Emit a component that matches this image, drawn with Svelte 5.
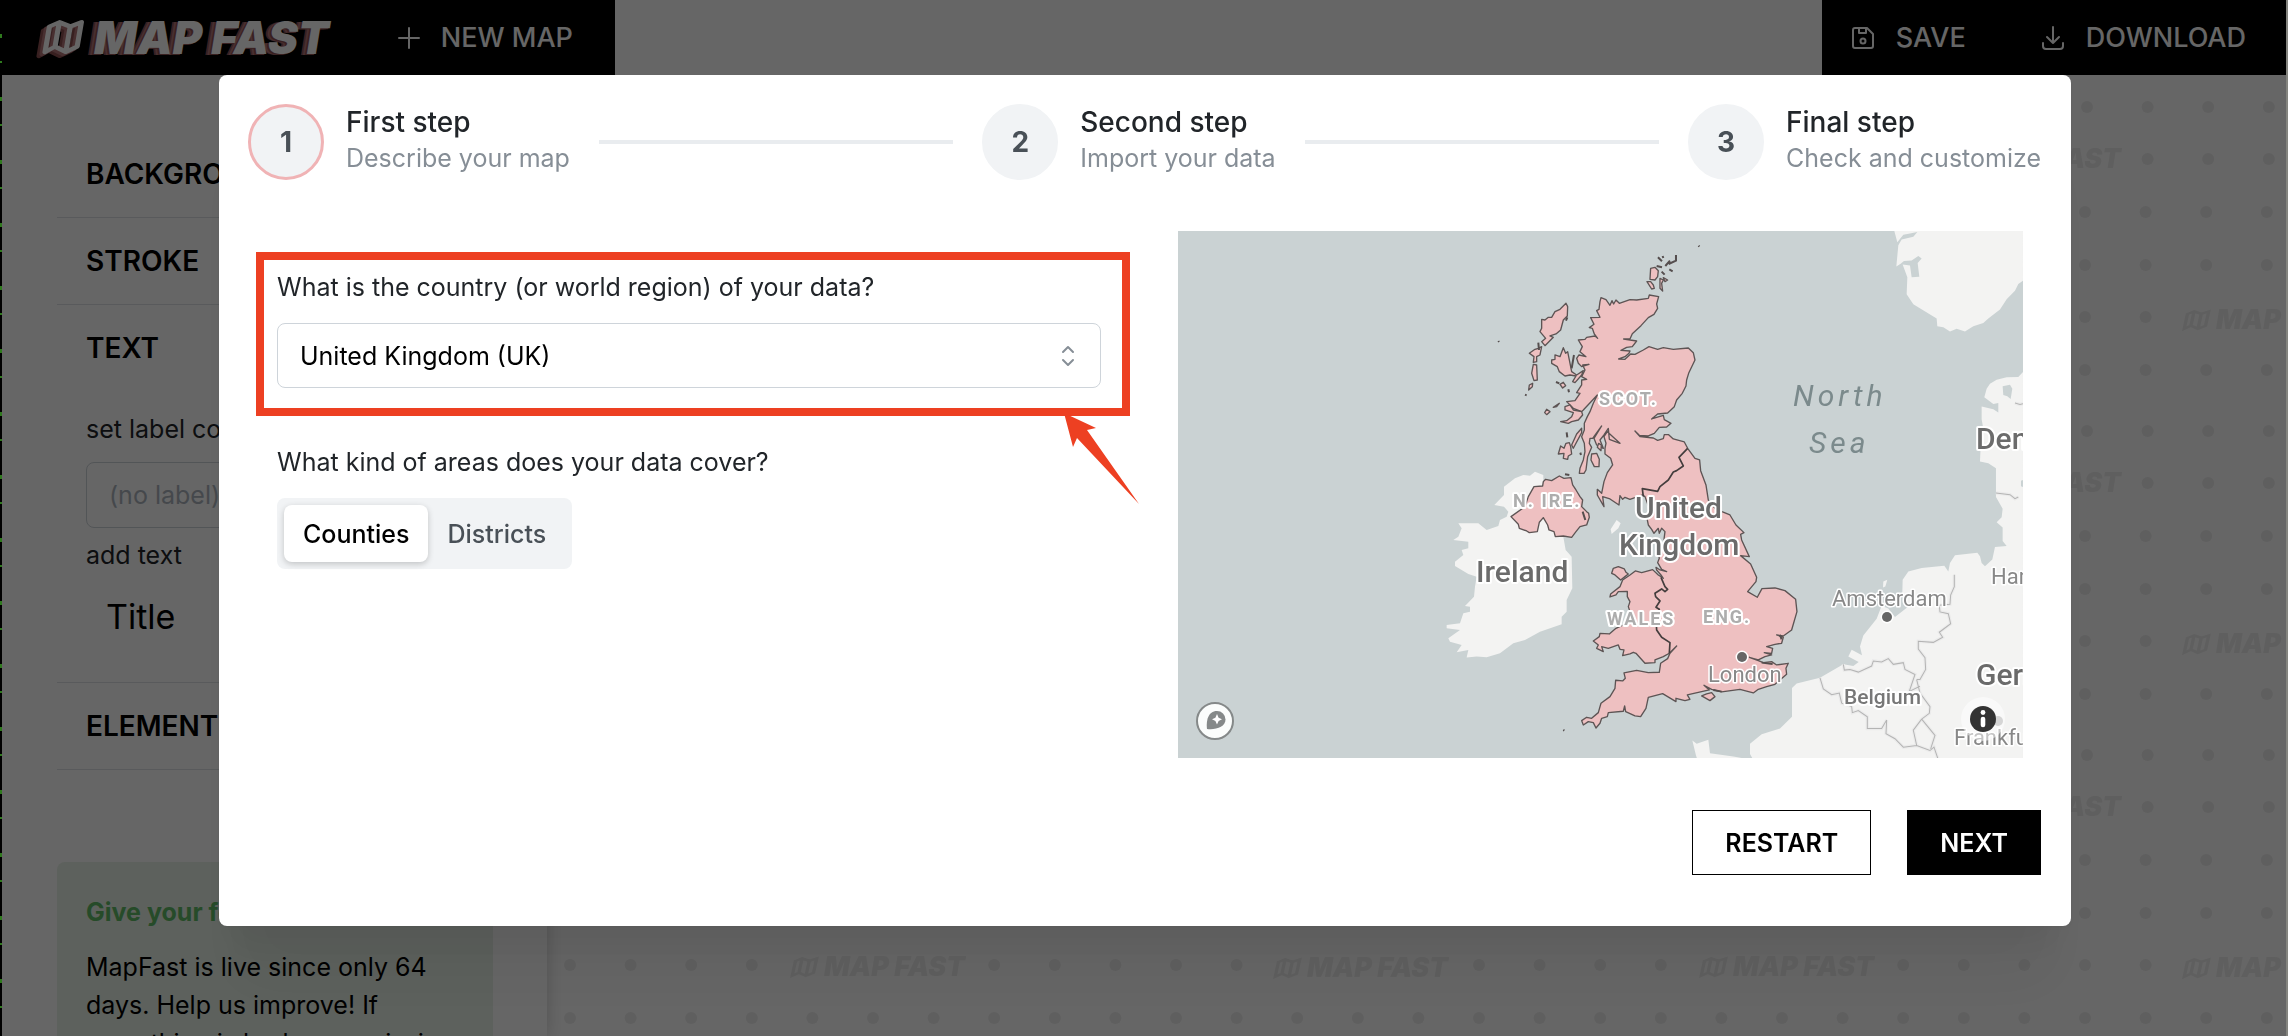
<script>
  let country = $state('United Kingdom (UK)');
  let area = $state('Counties');
  let label = $state('');

  const steps = [
    { n: 1, title: 'First step', text: 'Describe your map' },
    { n: 2, title: 'Second step', text: 'Import your data' },
    { n: 3, title: 'Final step', text: 'Check and customize' }
  ];
  const areas = ['Counties', 'Districts'];

  // Dot grid of the canvas wallpaper; some cells give way to a logo.
  const rows = [
    { y: 32, x: 32, skip: [] },
    { y: 84, x: 32, skip: [8, 9, 10] },
    { y: 137, x: 30, skip: [] },
    { y: 190, x: 30, skip: [] },
    { y: 242, x: 30, skip: [4, 5, 6, 12, 13, 14] },
    { y: 295, x: 30, skip: [] }
  ];
  const dots = rows.flatMap((r) =>
    Array.from({ length: 15 }, (_, i) => i)
      .filter((i) => !r.skip.includes(i))
      .map((i) => ({ x: r.x + (i * 909) / 15, y: r.y }))
  );
  const marks = [
    { x: 498, y: 84 },
    { x: 251, y: 244 },
    { x: 734, y: 245 }
  ];

  const britain =
    'M603 203L618 209 630 226 636 212 641 222 648 210 658 220 690 209 710 210 745 205 748 195 776 200 770 222 773 235 762 253 745 263 723 287 697 311 690 327 671 327 710 333 697 350 680 352 663 361 690 363 687 370 675 380 656 387 675 388 692 372 705 373 730 360 747 350 773 358 790 353 820 358 865 354 880 368 885 390 866 430 860 450 858 468 847 490 830 510 823 530 803 549 773 552 755 567 790 556 793 569 813 580 800 591 778 592 763 610 745 618 718 616 705 603 720 620 760 624 773 631 790 626 793 614 806 614 820 627 853 636 863 655 885 685 899 690 902 722 918 765 925 810 945 835 966 845 990 855 1008 885 1032 908 1022 913 1025 930 1048 980 1022 977 1052 1002 1070 1042 1068 1055 1043 1085 1072 1102 1086 1076 1125 1074 1155 1082 1187 1108 1191 1145 1175 1200 1150 1218 1130 1215 1150 1222 1145 1240 1125 1243 1100 1250 1118 1255 1115 1270 1093 1268 1115 1275 1095 1280 1075 1290 1048 1282 1075 1292 1090 1298 1115 1295 1130 1305 1165 1300 1158 1315 1160 1333 1125 1363 1100 1370 1075 1378 1060 1389 1020 1378 965 1386 935 1378 912 1366 928 1380 895 1387 862 1395 870 1408 855 1412 828 1405 828 1415 788 1391 745 1402 738 1435 722 1460 705 1458 677 1445 674 1428 670 1444 625 1448 622 1460 605 1465 600 1480 588 1494 580 1478 565 1475 550 1485 545 1472 560 1462 575 1465 595 1448 603 1420 630 1400 645 1375 647 1351 668 1353 676 1345 672 1329 710 1321 745 1328 778 1327 782 1300 803 1286 810 1270 830 1248 808 1270 790 1280 765 1290 765 1298 735 1300 708 1270 700 1267 690 1272 668 1277 672 1260 660 1258 655 1245 625 1255 605 1250 610 1265 590 1255 595 1245 580 1233 598 1220 600 1210 628 1212 648 1195 670 1185 690 1145 685 1130 690 1115 682 1100 682 1084 655 1085 648 1095 630 1101 632 1092 660 1070 668 1050 690 1035 706 1023 725 1028 758 1019 775 1035 790 1045 783 1035 770 1020 768 1012 780 1020 800 1025 785 1018 773 998 778 985 775 970 790 945 795 905 785 895 778 910 775 895 762 910 755 898 745 885 742 870 746 830 735 800 728 795 690 808 675 802 668 808 660 797 657 825 630 807 608 800 612 830 592 795 592 778 605 790 612 755 622 728 638 705 632 685 615 672 615 655 618 640 612 620 622 605 660 640 628 628 625 595 612 615 600 630 610 655 590 645 582 625 605 588 578 625 570 625 568 640 575 652 563 680 558 720 552 730 538 730 540 715 550 690 555 665 553 640 545 620 553 600 553 580 562 560 570 545 580 520 592 495 550 540 545 545 520 535 500 515 525 512 540 490 530 488 545 465 545 450 560 448 545 440 555 420 548 405 567 403 545 410 535 400 530 385 537 375 558 380 540 365 547 350 535 330 555 328 560 322 585 318 593 325 583 312 577 295 568 293 582 283 572 263 600 262 590 242 597 238 600 215Z';
  const ulster =
    'M437 748L455 752 478 738 492 745 513 743 518 765 528 780 540 800 548 810 545 830 560 845 566 850 568 862 560 885 540 890 528 905 515 922 490 918 466 920 462 905 447 900 443 885 430 863 418 877 412 905 388 908 380 903 358 895 355 883 333 860 375 830 385 800 402 770 428 768 430 755Z';
  const islands = [
    'M498 220L503 230 502 258 490 270 482 300 468 312 450 318 460 322 435 347 425 335 437 325 420 305 425 295 425 268 435 270 445 262 455 262 465 245 480 238Z',
    'M388 370L405 358 415 355 425 350 420 375 410 380 410 395 400 397 402 380Z',
    'M400 403L410 405 412 450 402 452 395 430Z',
    'M388 465L398 460 397 470 386 480Z',
    'M490 353L497 370 503 365 508 390 515 425 530 435 550 422 545 435 525 458 518 455 528 438 510 435 495 438 478 425 472 410 455 400 455 390 465 388 465 375 480 380Z',
    'M480 463L490 457 497 467 488 474Z',
    'M434 548L440 538 450 545 440 554Z M460 532L478 520 470 530Z',
    'M495 530L510 525 520 540 545 545 548 555 535 570 515 575 505 580 482 575 500 572 515 560 520 548 495 540Z',
    'M545 595L545 608 520 655 515 645 530 612Z',
    'M475 672L482 648 492 655 498 640 508 638 512 650 515 672 505 678 503 688 490 685 492 670Z',
    'M575 672L590 670 598 688 597 710 583 710 573 690Z',
    'M596 640L604 645 603 662 592 652Z',
    'M752 115L765 112 775 122 773 140 765 150 750 148Z M741 155L752 155 760 165 763 175 755 177Z M780 145L790 150 785 160 788 183 780 175Z M790 143L803 150 795 155Z',
    'M640 1015L655 1010 673 1017 678 1027 685 1032 675 1040 662 1050 645 1035 635 1030Z',
    'M905 1398L920 1392 935 1388 945 1400 930 1412Z'
  ];
  const specks =
    'M774 82L786 94 M788 78L790 84 M828 75L828 92 806 102 M810 92L796 108 M770 108L786 112 M785 125L794 134 M808 118L818 124 M896 47L898 50 M295 333L297 336 M502 262L498 272 M415 338L417 360 M522 375L515 415 M468 456L478 460 M505 478L507 487 M375 494L380 496 M500 607L502 622 M495 733L508 735 M541 668L543 675 M490 1500L493 1502 M940 1380L965 1385 M1085 1298L1118 1302 M1140 1215L1145 1228 M548 845L556 870';
  const ireland =
    'M430 735L405 725 390 737 370 735 345 745 312 770 312 795 283 825 312 830 325 845 320 860 300 870 295 888 260 900 235 880 175 880 185 895 175 920 160 930 205 935 205 955 185 960 190 975 165 995 165 1008 205 1032 230 1040 225 1070 222 1100 195 1128 210 1130 210 1145 190 1150 180 1180 140 1185 140 1195 180 1200 145 1225 150 1235 185 1245 170 1267 205 1260 200 1283 230 1280 260 1282 300 1270 340 1240 375 1230 420 1205 485 1183 485 1160 500 1145 500 1110 517 1075 515 980 497 960 490 920 430 850Z M632 898L650 870 662 880 655 895 635 912Z';
  const norway =
    'M343 3L352 36 370 14 390 10 412 6 400 20 365 28 355 45 349 108 362 100 372 92 395 90 415 77 425 84 413 98 418 138 395 140 390 105 368 102 382 140 380 190 400 220 470 262 472 285 490 288 510 300 530 292 555 300 580 285 610 275 625 262 660 235 680 205 705 180 715 160 729 150 729 3Z';
  const continent =
    'M729 420L715 435 680 436 650 443 630 455 620 470 613 495 640 515 655 512 655 540 640 530 605 522 605 560 612 600 602 640 600 685 625 690 648 705 648 790 668 825 665 850 650 865 668 880 668 920 680 935 645 938 637 975 615 995 605 985 600 965 592 955 525 962 510 985 505 1010 493 993 425 1000 385 1010 368 1035 367 1075 388 1112 345 1145 325 1120 305 1112 290 1150 250 1200 240 1232 246 1258 215 1242 205 1262 236 1278 220 1290 190 1285 120 1325 50 1342 36 1355 36 1440 0 1475 -55 1492 -90 1520 -90 1550 -80 1568 -140 1558 -210 1548 -215 1508 -250 1520 -263 1510 -252 1555 -245 1575 729 1575Z M310 1040L322 1035 316 1055 309 1058Z';
  const lakes = 'M668 462L690 458 697 470 692 500 682 492 670 488Z M723 742L729 740 729 760 723 758Z';
  const borders =
    'M523 1020L523 1055 512 1080 510 1107 478 1110 480 1130 505 1135 512 1165 478 1190 488 1205 460 1220 415 1217 415 1240 435 1265 437 1300 420 1330 410 1330 M648 778L690 783 705 795 715 790 M705 512L720 516 729 514 M190 1285L193 1302 210 1300 235 1308 275 1290 280 1275 305 1278 325 1268 340 1285 370 1280 375 1300 405 1315 388 1365 420 1350 M120 1325L130 1358 155 1375 178 1370 185 1400 215 1410 217 1428 235 1422 262 1440 262 1475 305 1475 320 1450 318 1490 345 1505 370 1530 410 1525 450 1540 462 1530 475 1568 M425 1447L400 1480 410 1525 M425 1447L465 1495 452 1535 M410 1330L420 1370 450 1410 448 1430 425 1447';
</script>

{#snippet mapGlyph()}
  <path d="M3 8 L10 4 L19 8 L27 4 V27 L19 32 L10 27 L3 32 Z M10 4 V27 M19 8 V32" />
{/snippet}

<div class="app">
  <header>
    <div class="bar">
      <a class="logo" href="#home">
        <svg class="logo-icon" width="52" height="42" viewBox="0 0 52 42" aria-hidden="true">
          <g fill="none" stroke-width="4" stroke-linejoin="round">
            <g stroke="#8c5052" transform="translate(5 5) scale(1.300 1.060) skewX(-8)">{@render mapGlyph()}</g>
            <g stroke="#b47678" transform="translate(8 3) scale(1.300 1.060) skewX(-8)">{@render mapGlyph()}</g>
            <g stroke="#fff" transform="translate(11 1) scale(1.300 1.060) skewX(-8)">{@render mapGlyph()}</g>
          </g>
        </svg>
        <span>MAP FAST</span>
      </a>
      <button class="nav">
        <svg width="24" height="24" viewBox="0 0 24 24" aria-hidden="true"><path d="M12 2v20M2 12h20" /></svg>
        NEW MAP
      </button>
    </div>
    <div class="bar right">
      <button class="nav">
        <svg width="26" height="26" viewBox="0 0 26 26" aria-hidden="true">
          <path d="M5 3h12l6 6v12a2 2 0 0 1-2 2H5a2 2 0 0 1-2-2V5a2 2 0 0 1 2-2zM9 3v5h7V3" /><circle cx="13" cy="16" r="2.500" />
        </svg>
        SAVE
      </button>
      <button class="nav">
        <svg width="26" height="26" viewBox="0 0 26 26" aria-hidden="true">
          <path d="M3 18v3a3 3 0 0 0 3 3h14a3 3 0 0 0 3-3v-3M7 12l6 6 6-6M13 2v16" />
        </svg>
        DOWNLOAD
      </button>
    </div>
  </header>

  <div class="workspace">
    <aside>
      <section><button class="head">BACKGROUND</button></section>
      <section><button class="head">STROKE</button></section>
      <section>
        <button class="head">TEXT</button>
        <div class="fields">
          <label for="label-column">set label column</label>
          <input id="label-column" bind:value={label} placeholder="(no label)" />
          <span>add text</span>
          <button class="title">Title</button>
        </div>
      </section>
      <section><button class="head">ELEMENTS</button></section>
      <div class="feedback">
        <h2>Give your feedback</h2>
        <p>MapFast is live since only 64 days. Help us improve! If something is broken or missing</p>
      </div>
    </aside>
    <main>
      <svg class="wallpaper" width="100%" height="100%" aria-hidden="true">
        <defs>
          <pattern id="tile" x="-7" y="0" width="909" height="324" patternUnits="userSpaceOnUse">
            {#each dots as d}
              <circle cx={d.x} cy={d.y} r="6" />
            {/each}
            {#each marks as m}
              <g transform="translate({m.x} {m.y})">
                <g class="mark-icon" transform="translate(3 -11) scale(.86 .62) skewX(-9)">{@render mapGlyph()}</g>
                <text x="33" y="9">MAP FAST</text>
              </g>
            {/each}
          </pattern>
        </defs>
        <rect width="100%" height="100%" fill="url(#tile)" />
      </svg>
    </main>
  </div>
</div>

<div class="overlay">
  <div class="modal" role="dialog" aria-modal="true" aria-label="New map">
    <ol class="stepper">
      {#each steps as s, i}
        {#if i > 0}<li class="line" aria-hidden="true"></li>{/if}
        <li class="step">
          <span class="num" class:active={i === 0}>{s.n}</span>
          <span class="step-text"><strong>{s.title}</strong><span>{s.text}</span></span>
        </li>
      {/each}
    </ol>

    <div class="content">
      <form>
        <div class="highlight">
          <label for="country">What is the country (or world region) of your data?</label>
          <div class="select">
            <select id="country" bind:value={country}>
              <option>United Kingdom (UK)</option>
            </select>
            <svg width="14" height="22" viewBox="0 0 14 22" aria-hidden="true"><path d="M2 7l5-5 5 5M2 15l5 5 5-5" /></svg>
          </div>
          <svg class="arrow" width="76" height="92" viewBox="0 0 76 92" aria-hidden="true">
            <path d="M1 0L33 15 24 17 76 91 14 25 10 34Z" />
          </svg>
        </div>
        <fieldset>
          <legend>What kind of areas does your data cover?</legend>
          <div class="segments">
            {#each areas as a}
              <label class:on={area === a}>
                <input type="radio" name="area" value={a} bind:group={area} />{a}
              </label>
            {/each}
          </div>
        </fieldset>
      </form>

      <div class="map">
        <svg viewBox="1178 231 845 527" role="img" aria-label="Map of the United Kingdom">
          <rect x="1178" y="231" width="845" height="527" fill="#cad2d3" />
          <g transform="translate(1780 230) scale(.3333 .338)">
            <path class="land" d={norway} />
            <path class="land" d={continent} />
            <path d={lakes} fill="#cad2d3" />
            <path class="border-glow" d={borders} />
            <path class="border" d={borders} />
          </g>
          <g transform="translate(1400 230) scale(.3333)">
            <path class="land" d={ireland} />
            <path class="uk" d={britain} />
            <path class="uk" d={ulster} />
            {#each islands as d}<path class="uk" {d} />{/each}
            <path class="specks" d={specks} />
            <path class="inner" d="M863 655L837 682 850 708 830 722 820 726 805 750 780 770 773 784 727 776 730 800 M783 1042L795 1070 803 1078 795 1085 785 1077 765 1090 767 1100 780 1113 768 1132 778 1138 768 1160 770 1200 785 1222 810 1238 808 1270" />
          </g>
          <g class="sea">
            <text x="1793" y="406">North</text>
            <text x="1809" y="453">Sea</text>
          </g>
          <g class="region">
            <text x="1599" y="405">SCOT.</text>
            <text x="1513" y="507">N. IRE.</text>
            <text x="1607" y="625">WALES</text>
            <text x="1703" y="623">ENG.</text>
          </g>
          <g class="country">
            <text x="1635" y="518">United</text>
            <text x="1619" y="555">Kingdom</text>
            <text x="1476" y="582">Ireland</text>
            <text x="1976" y="449">Denmark</text>
            <text x="1976" y="685">Germany</text>
          </g>
          <text class="minor" x="1844" y="704">Belgium</text>
          <circle class="dot" cx="1742" cy="657" r="5" />
          <circle class="dot" cx="1887" cy="617" r="5" />
          <circle cx="1998" cy="721" r="5" fill="#aaa" />
          <g class="city">
            <text x="1708" y="682">London</text>
            <text x="1832" y="606">Amsterdam</text>
            <text x="1991" y="584">Hamburg</text>
            <text x="1954" y="745">Frankfurt</text>
          </g>
        </svg>
        <a class="attribution" href="#map" aria-label="Map provider">
          <svg width="38" height="38" viewBox="0 0 38 38">
            <circle cx="19" cy="19" r="18" fill="#fbfdfc" stroke="#858989" stroke-width="2" />
            <path d="M11 27C10 19 12 9 21 9a8.500 8.500 0 0 1 8.500 8.500C29.500 25 20 28 11 27z" fill="#858989" />
            <path d="M21 12l1.600 3.700L26 17.300l-3.400 1.600L21 22.600l-1.600-3.700L16 17.300l3.400-1.600z" fill="#fff" />
          </svg>
        </a>
        <button class="info" aria-label="Map information" type="button">
          <svg width="44" height="44" viewBox="0 0 44 44">
            <circle cx="22" cy="22" r="22" fill="#fff" fill-opacity=".5" />
            <circle cx="22" cy="22" r="13" fill="#333" />
            <circle cx="22" cy="15.500" r="2.400" fill="#fff" />
            <path d="M22 22v6" stroke="#fff" stroke-width="4.600" stroke-linecap="round" />
          </svg>
        </button>
      </div>
    </div>

    <footer>
      <button type="button">RESTART</button>
      <button type="button" class="primary">NEXT</button>
    </footer>
  </div>
</div>

<style>
  :global(body) { overflow: hidden; background: #fff; }
  * { box-sizing: border-box; }
  .app, .overlay { font-family: Inter, 'Liberation Sans', sans-serif; font-size: 25px; line-height: 32px; color: #212529; }
  button, input, select { font: inherit; color: inherit; margin: 0; }
  button { border: 0; background: none; padding: 0; cursor: pointer; }

  .app { height: 100vh; display: flex; flex-direction: column; overflow: hidden; padding: 0 2px; }
  header { display: flex; justify-content: space-between; height: 75px; flex: none; }
  .bar { display: flex; align-items: center; gap: 68px; background: #000; color: #fff; padding: 0 42px 0 34px; }
  .bar.right { gap: 74px; padding: 0 40px 0 28px; }
  .nav { display: flex; align-items: center; gap: 20px; font-size: 27px; font-weight: 500; }
  .nav svg { fill: none; stroke: currentColor; stroke-width: 2; stroke-linecap: round; stroke-linejoin: round; }
  .logo { display: flex; align-items: center; gap: 6px; color: #fff; text-decoration: none; font-size: 45px; line-height: 48px; font-style: italic; font-weight: 900; white-space: nowrap; }
  .logo span { text-shadow: -2px 1px #8c5052, -4px 1px #b47678, -6px 1px #8c5052; }

  .workspace { flex: 1; display: flex; min-height: 0; }
  aside { width: 545px; flex: none; padding: 56px 54px 0 55px; box-shadow: 0 0 16px rgba(0, 0, 0, .2); position: relative; }
  section { border-bottom: 1px solid #dee2e6; padding: 0 29px; }
  .head { display: block; height: 86px; padding-bottom: 1px; font-size: 28px; font-weight: 600; color: #000; }
  .fields { display: flex; flex-direction: column; padding: 22px 0 34px; }
  .fields input { height: 66px; margin: 17px 0 11px; padding: 0 22px; border: 1px solid #ced4da; border-radius: 8px; background: none; }
  .fields input::placeholder { color: #adb5bd; }
  .title { align-self: flex-start; padding: 30px 20px 15px; font-size: 34px; color: #000; }
  .feedback { margin-top: 92px; padding: 34px 29px; background: #e8f2e8; border-radius: 8px; color: #000; }
  .feedback h2 { margin: 0 0 20px; font-size: 25px; font-weight: 700; line-height: 32px; color: #60bc66; }
  .feedback p { margin: 0; line-height: 38px; }
  main { flex: 1; min-width: 0; }
  .wallpaper { display: block; fill: #eee; }
  .wallpaper text { font: italic 900 27px Inter, sans-serif; }
  .mark-icon { fill: none; stroke: #eee; stroke-width: 4; }

  .overlay { position: fixed; inset: 0; padding: 75px 215px 0 217px; background: rgba(0, 0, 0, .6); border: solid #84847f; border-width: 0 2px; }
  .overlay::before { content: ''; position: absolute; inset: 0 auto 0 -2px; width: 2px; background: repeating-linear-gradient(#000 0 34px, #2f7a1e 34px 38px, #000 38px 61px, #2f7a1e 61px 63px); }
  .modal { background: #fff; border-radius: 8px; padding: 29px 30px 51px 29px; box-shadow: 0 2px 6px rgba(0, 0, 0, .05), 0 72px 56px -14px rgba(0, 0, 0, .05), 0 34px 34px -14px rgba(0, 0, 0, .06); }

  .stepper { list-style: none; margin: 0; padding: 0; display: flex; align-items: center; }
  .step { display: flex; align-items: center; gap: 22px; }
  .num { width: 76px; height: 76px; border-radius: 50%; border: 3px solid #f1f3f5; background: #f1f3f5; display: grid; place-items: center; font-size: 28px; font-weight: 700; color: #495057; }
  .num.active { border-color: #f0b3b5; }
  .step-text { display: flex; flex-direction: column; padding-bottom: 4px; line-height: 36px; color: #868e96; white-space: nowrap; }
  .step-text strong { font-size: 28px; font-weight: 500; color: #212529; }
  .line { flex: 1; height: 4px; margin: 0 29px; background: #e9ecef; }

  .content { display: grid; grid-template-columns: 874fr 845fr; gap: 48px; margin: 51px 18px 0 8px; }
  form { padding-top: 21px; }
  .highlight { position: relative; border: 8px solid #ed4022; padding: 11px 21px 20px 13px; }
  .highlight > label { display: block; margin-bottom: 20px; }
  .arrow { position: absolute; right: -17px; top: 153px; fill: #ed4022; }
  .select { position: relative; }
  select { appearance: none; display: block; width: 100%; height: 65px; padding: 0 60px 0 22px; border: 1px solid #ced4da; border-radius: 8px; background: #fff; color: #000; }
  .select svg { position: absolute; right: 26px; top: 22px; fill: none; stroke: #868e96; stroke-width: 2; stroke-linecap: round; stroke-linejoin: round; pointer-events: none; }
  fieldset { border: 0; margin: 30px 0 0; padding: 0 21px; }
  legend { padding: 0; margin-bottom: 20px; }
  .segments { display: inline-flex; padding: 7px; border-radius: 8px; background: #f1f3f5; }
  .segments label { position: relative; display: flex; align-items: center; height: 57px; padding: 0 19px; border-radius: 8px; font-weight: 500; color: #495057; cursor: pointer; }
  .segments label.on { background: #fff; color: #000; box-shadow: 0 2px 6px rgba(0, 0, 0, .2); }
  .segments input { position: absolute; opacity: 0; inset: 0; }

  .map { position: relative; }
  .map > svg { display: block; width: 100%; }
  .attribution, .info { position: absolute; line-height: 0; }
  .attribution { left: 18px; bottom: 18px; }
  .info { right: 18px; bottom: 17px; }
  .land { fill: #f3f3f2; }
  .uk { fill: #eec0c1; stroke: #5d5454; stroke-width: 4; stroke-linejoin: round; }
  .specks { fill: none; stroke: #554e4e; stroke-width: 6; }
  .inner { fill: none; stroke: #443d3d; stroke-width: 5; stroke-linejoin: round; }
  .border { fill: none; stroke: #b4b4b4; stroke-width: 3; }
  .border-glow { fill: none; stroke: #ebebeb; stroke-width: 10; }
  .dot { fill: #666; stroke: #fff; stroke-width: 3; paint-order: stroke; }
  .map text { font-family: Roboto, sans-serif; stroke: #fff; stroke-width: 4; stroke-linejoin: round; paint-order: stroke; }
  .map .country text { font-size: 30px; font-weight: 500; fill: #6b6b6b; }
  .map .region text { font-size: 18px; font-weight: 700; letter-spacing: 2px; fill: #adadad; }
  .map .city text { font-size: 22px; fill: #888; stroke-width: 3; }
  .map .minor { font-size: 21px; font-weight: 500; fill: #777; }
  .map .sea text { font-size: 30px; font-style: italic; letter-spacing: 4px; fill: #7b8a8c; stroke: none; }

  footer { display: flex; justify-content: flex-end; gap: 36px; margin-top: 52px; }
  footer button { height: 65px; padding: 0 32px; border: 1px solid #000; background: #fff; color: #000; font-weight: 600; }
  footer .primary { background: #000; color: #fff; }
</style>
